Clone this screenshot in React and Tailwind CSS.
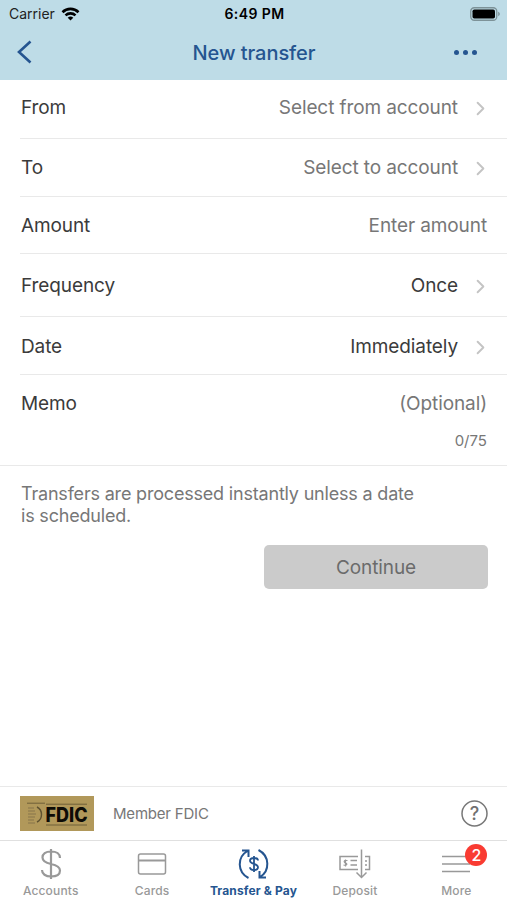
import React from 'react';
import { ChevronRight } from 'lucide-react';

const rows = [
  { label: 'From', value: 'Select from account', cls: 'h-[59px] pb-[1px]', chevron: true },
  { label: 'To', value: 'Select to account', cls: 'h-[58px] pt-[1px]', chevron: true },
  { label: 'Amount', value: 'Enter amount', cls: 'h-[57px] pt-[2px]' },
  { label: 'Frequency', value: 'Once', cls: 'h-[63px] pt-[3px]', dark: true, chevron: true },
  { label: 'Date', value: 'Immediately', cls: 'h-[58px] pt-[3px]', dark: true, chevron: true },
];

function StatusBar() {
  return (
    <div className="flex h-[27px] items-center justify-between pr-[7px] pl-[9px] text-black">
      <div className="flex w-40 items-center gap-[6px]">
        <span className="text-[14px] text-[#222]">Carrier</span>
        <svg width="19" height="14" viewBox="0 0 18 14" fill="none" stroke="currentColor" strokeWidth="2.6">
          <path d="M1 5.2a11.4 11.4 0 0 1 16 0" />
          <path d="M4 8.4a7.2 7.2 0 0 1 10 0" />
          <path d="M9 13.6 6.2 10.8a4 4 0 0 1 5.6 0Z" fill="currentColor" stroke="none" />
        </svg>
      </div>
      <span className="text-[14px] font-semibold tracking-[0.4px]">6:49 PM</span>
      <div className="flex w-40 justify-end">
        <svg width="30" height="14" viewBox="0 0 30 14">
          <rect x="0.75" y="0.75" width="26" height="12.5" rx="3.5" fill="none" stroke="#7d9298" strokeWidth="1.3" />
          <rect x="2.5" y="2.5" width="22.5" height="9" rx="1.8" fill="#000" />
          <path d="M28.2 4.8v4.4c1-.4 1.6-1.2 1.6-2.2s-.6-1.8-1.6-2.2Z" fill="#7d9298" />
        </svg>
      </div>
    </div>
  );
}

function Tab({ label, active, children }) {
  return (
    <button
      type="button"
      className={`flex flex-1 flex-col items-center ${active ? 'font-bold text-[#255590]' : 'font-medium text-[#999]'}`}
    >
      <span className="flex h-[42px] items-center justify-center pt-[3px]">{children}</span>
      <span className="text-[12px] leading-[16px] tracking-[0.15px] whitespace-nowrap">{label}</span>
    </button>
  );
}

export default function App() {
  return (
    <main className="flex h-[900px] w-[507px] flex-col overflow-hidden bg-white font-['Inter',sans-serif] text-[#3b3b3b]">
      <header className="h-20 bg-[#bedce7]">
        <StatusBar />
        <div className="flex h-[50px] items-center justify-between pr-[30px] pl-[17px] text-[#255590]">
          <div className="w-12">
            <svg width="15" height="24" viewBox="0 0 15 24" fill="none" stroke="currentColor" strokeWidth="2.6">
              <path d="M13.5 1.5 2 12l11.5 10.5" />
            </svg>
          </div>
          <h1 className="pt-[1px] pl-[1px] text-[20px] font-medium tracking-[-0.05px]">New transfer</h1>
          <div className="flex w-[35px] justify-end gap-1">
            <span className="size-[5px] rounded-full bg-[#255590]" />
            <span className="size-[5px] rounded-full bg-[#255590]" />
            <span className="size-[5px] rounded-full bg-[#255590]" />
          </div>
        </div>
      </header>

      {/* Form rows */}
      {rows.map((row) => (
        <div
          key={row.label}
          className={`ml-5 flex items-center justify-between border-b border-[#e9e9e9] pr-5 pl-px text-[19px] tracking-[-0.1px] ${row.cls}`}
        >
          <span>{row.label}</span>
          <span className={`flex items-center ${row.dark ? '' : 'text-[#777]'}`}>
            {row.value}
            {row.chevron && <ChevronRight className="ml-[11px] -mr-[5px] text-[#c4c4c4]" size={23} strokeWidth={2} />}
          </span>
        </div>
      ))}

      <div className="h-[91px] border-b border-[#e9e9e9] pt-[14px] pr-5 pl-[21px]">
        <div className="flex justify-between text-[19px] leading-[30px] tracking-[-0.1px]">
          <span>Memo</span>
          <span className="text-[#777]">(Optional)</span>
        </div>
        <div className="mt-[12px] text-right text-[15px] leading-5 text-[#777]">0/75</div>
      </div>

      <p className="pt-[17px] pr-5 pl-[21px] text-[18px] leading-[22px] tracking-[-0.19px] text-[#777]">
        Transfers are processed instantly unless a date
        <br />
        is scheduled.
      </p>

      <div className="flex flex-1 items-start justify-end pt-[18px] pr-[19px]">
        <button
          type="button"
          className="h-11 w-56 rounded-[5px] bg-[#cbcbcb] pt-[2px] text-[19px] tracking-[-0.1px] text-[#6b6b6b]"
        >
          Continue
        </button>
      </div>

      {/* FDIC notice */}
      <div className="flex h-[54px] items-center border-t border-[#e9e9e9] pr-[19px] pl-5">
        <svg width="74" height="35" viewBox="0 0 74 35">
          <rect width="74" height="35" fill="#b1985a" />
          <path d="M7 7.2h18M26 8.2h41M26 29h41" stroke="#5e5130" strokeWidth="0.8" />
          <path d="M8 12h6M8 15h7M8 18h8M8 21h7M8 24h6M8 27h7" stroke="#87744a" strokeWidth="1" />
          <path d="M17 11c6 3 6 12 0 15" fill="none" stroke="#5e5130" strokeWidth="1.4" />
          <text x="25.500" y="25.7" fontSize="19.5" fontWeight="800" textLength="42" lengthAdjust="spacingAndGlyphs" fill="#0d0b06">FDIC</text>
        </svg>
        <span className="ml-[19px] flex-1 pt-[1px] text-[15px] tracking-[-0.2px] text-[#777]">Member FDIC</span>
        <svg width="27" height="27" viewBox="0 0 27 27" fill="none" stroke="#777" strokeWidth="1.5">
          <circle cx="13.5" cy="13.5" r="12.500" />
          <text x="13.5" y="20" textAnchor="middle" fontSize="18" fontWeight="500" fill="#707070" stroke="none">?</text>
        </svg>
      </div>

      {/* Bottom tab bar */}
      <nav className="flex h-[60px] border-t border-[#e0e0e0]">
        <Tab label="Accounts">
          <svg width="22" height="32" viewBox="0 0 22 32" fill="none" stroke="currentColor" strokeWidth="2.2">
            <path d="M11 1v30M20 10c0-4-3.5-6.5-9-6.5S2.500 5.800 2.500 9.500c0 3.900 3.500 5.400 8.500 6.500s9 2.600 9 6.500-3.600 6-9 6-9-2.500-9-6.500" />
          </svg>
        </Tab>
        <Tab label="Cards">
          <svg width="30" height="24" viewBox="0 0 30 24" fill="none" stroke="currentColor" strokeWidth="1.5">
            <rect x="1.500" y="2" width="27" height="20" rx="2" />
            <path d="M1.500 8.500h27" strokeWidth="2" />
          </svg>
        </Tab>
        <Tab label="Transfer & Pay" active>
          <svg width="32" height="32" viewBox="0 0 32 32" fill="none" stroke="currentColor" strokeWidth="2">
            <path d="M10.500 30C-1 24-1 9 9.500 3M4 2.500h6.500V9" />
            <path d="M20.500 2C32 8 32 23 22 29M28 29.500h-6.500V23" />
            <path d="M16 8v16M20 12.500c0-1.700-1.500-2.500-4-2.500s-4 .9-4 2.700c0 4 8 2.500 8 6.600 0 1.800-1.500 2.700-4 2.700s-4-.9-4-2.700" strokeWidth="1.800" />
          </svg>
        </Tab>
        <Tab label="Deposit">
          <svg width="34" height="32" viewBox="0 0 34 32" fill="none" stroke="currentColor" strokeWidth="1.500">
            <path d="M20 8.500H2v13H20M27 8.500h4.500v13H27" />
            <path d="M12.500 12.500H19M12.500 17H19M28 12v2M28 16v2" />
            <path d="M9.500 12.500c-4-1-4 2-2 2.500s2 3-2 2M7.500 11.500v7" strokeWidth="1.200" />
            <path d="M23.500 1.500v28M18.500 24.500l5 5 5-5" />
          </svg>
        </Tab>
        <Tab label="More">
          <span className="relative">
            <svg width="30" height="24" viewBox="0 0 30 24" fill="none" stroke="currentColor" strokeWidth="1.500">
              <path d="M1 4.500h28M1 12h28M1 19.500h28" />
            </svg>
            <span className="absolute -top-[8px] left-[24px] flex size-[22px] items-center justify-center rounded-full bg-[#f93b32] text-[16px] text-white">
              2
            </span>
          </span>
        </Tab>
      </nav>
    </main>
  );
}
